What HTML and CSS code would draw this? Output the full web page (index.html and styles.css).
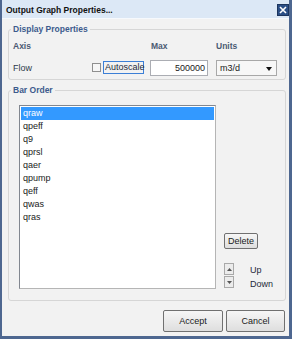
FILE: index.html
```html
<!DOCTYPE html>
<html lang="en">

<head>
  <meta charset="UTF-8" />
  <title>Output Graph Properties</title>
  <link rel="stylesheet" href="styles.css">
</head>

<body>
  <div class="window">
    <div class="titlebar">
      <span class="title">Output Graph Properties...</span>
      <span class="close">
        <svg width="12" height="12" viewBox="0 0 12 12">
          <rect x="0.5" y="0.5" width="11" height="11" fill="#2a4e86" stroke="#1c355e" />
          <path d="M3 3 L9 9 M9 3 L3 9" stroke="#fff" stroke-width="1.6" />
        </svg>
      </span>
    </div>

    <div class="content">
      <fieldset class="group display">
        <legend>Display Properties</legend>
        <div class="row head">
          <span class="col-axis">Axis</span>
          <span class="col-max">Max</span>
          <span class="col-units">Units</span>
        </div>
        <div class="row">
          <span class="col-axis">Flow</span>
          <span class="check"></span>
          <span class="autoscale">Autoscale</span>
          <span class="textbox">500000</span>
          <span class="select">m3/d<span class="arrow"></span></span>
        </div>
      </fieldset>

      <fieldset class="group order">
        <legend>Bar Order</legend>
        <div class="order-body">
          <ul class="listbox">
            <li class="selected">qraw</li>
            <li>qpeff</li>
            <li>q9</li>
            <li>qprsl</li>
            <li>qaer</li>
            <li>qpump</li>
            <li>qeff</li>
            <li>qwas</li>
            <li>qras</li>
          </ul>
          <div class="side">
            <span class="btn small">Delete</span>
            <div class="updown">
              <div class="spin">
                <span class="spin-btn"><svg width="5" height="3" viewBox="0 0 5 3"><path d="M0 3 L2.5 0 L5 3 Z" fill="#555" /></svg></span>
                <span class="spin-btn"><svg width="5" height="3" viewBox="0 0 5 3"><path d="M0 0 L2.5 3 L5 0 Z" fill="#555" /></svg></span>
              </div>
              <div class="updown-labels">
                <span>Up</span>
                <span>Down</span>
              </div>
            </div>
          </div>
        </div>
      </fieldset>

      <div class="buttons">
        <span class="btn big">Accept</span>
        <span class="btn big">Cancel</span>
      </div>
    </div>
  </div>
</body>

</html>
```

FILE: styles.css
```css
body {
  margin: 0;
  padding: 0;
  font-family: "Liberation Sans", Arial, sans-serif;
  font-size: 9px;
  color: #1a1a1a;
}

.window {
  width: 292px;
  height: 339px;
  box-sizing: border-box;
  border-left: 2px solid #4e6790;
  border-right: 3px solid #4e6790;
  border-bottom: 3px solid #4e6790;
  background-color: #f2f2f2;
  display: flex;
  flex-direction: column;
}

.titlebar {
  height: 19px;
  box-sizing: border-box;
  background-color: #dce8f6;
  border-bottom: 1px solid #f6f9fd;
  display: flex;
  align-items: center;
  justify-content: space-between;
  padding: 1px 0 0 4px;
}

.title {
  font-weight: bold;
  font-size: 8.5px;
  color: #111;
}

.close {
  display: flex;
}

.content {
  flex: 1;
  display: flex;
  flex-direction: column;
  padding: 0 3px 0 6px;
}

.group {
  margin: 0;
  border: 1px solid #d6d6d6;
  border-radius: 3px;
  min-width: 0;
}

.group legend {
  font-weight: bold;
  font-size: 8.5px;
  line-height: 11px;
  color: #3d5b8d;
  padding: 0 2px;
}

.display {
  margin-top: 5px;
  padding: 2px 3px 3px 4px;
}

.display legend {
  margin-left: -2px;
}

.row {
  display: flex;
  align-items: center;
  height: 17px;
}

.head {
  font-weight: bold;
  font-size: 8.5px;
  color: #4a5a72;
  margin-bottom: 5px;
}

.col-axis {
  width: 79px;
  color: #2e3a4c;
}

.head .col-axis {
  width: 138px;
  color: #4a5a72;
}

.col-max {
  width: 65px;
}

.check {
  width: 9px;
  height: 9px;
  box-sizing: border-box;
  border: 1px solid #8f8f8f;
  background-color: #f6f6f6;
  margin-right: 2px;
}

.autoscale {
  width: 41px;
  height: 13px;
  box-sizing: border-box;
  border: 1px solid #3c7fd6;
  padding-left: 1px;
  line-height: 11px;
  margin-right: 6px;
  color: #1e2a3a;
}

.textbox {
  width: 58px;
  height: 16px;
  box-sizing: border-box;
  border: 1px solid #abadb3;
  background-color: #fff;
  text-align: right;
  padding-right: 2px;
  line-height: 14px;
  margin-right: 8px;
}

.select {
  width: 61px;
  height: 16px;
  box-sizing: border-box;
  border: 1px solid #a8a8a8;
  background-color: #f7f7f7;
  line-height: 14px;
  padding-left: 3px;
  position: relative;
}

.arrow {
  position: absolute;
  right: 4px;
  top: 6px;
  border-left: 3px solid transparent;
  border-right: 3px solid transparent;
  border-top: 4px solid #111;
}

.order {
  margin-top: 5px;
  padding: 9px 3px 11px 10px;
}

.order legend {
  margin-left: -8px;
}

.order-body {
  display: flex;
}

.listbox {
  list-style: none;
  margin: 0;
  padding: 0;
  width: 197px;
  height: 184px;
  box-sizing: border-box;
  border: 1px solid #828790;
  border-right-color: #b5b5b5;
  border-bottom-color: #b5b5b5;
  background-color: #fff;
}

.listbox li {
  height: 13px;
  line-height: 13px;
  padding-left: 2px;
  margin: 0 1px;
}

.listbox li.selected {
  background-color: #3399ff;
  color: #fff;
  margin-top: 1px;
}

.side {
  display: flex;
  flex-direction: column;
  padding-left: 8px;
  padding-top: 128px;
}

.btn {
  display: flex;
  align-items: center;
  justify-content: center;
  border: 1px solid #707070;
  border-radius: 2px;
  background: linear-gradient(#f6f6f6, #dedede);
  color: #1a1a1a;
  box-sizing: border-box;
}

.small {
  width: 34px;
  height: 16px;
}

.updown {
  display: flex;
  margin-top: 14px;
}

.spin {
  display: flex;
  flex-direction: column;
  gap: 1px;
}

.spin-btn {
  width: 10px;
  height: 12px;
  box-sizing: border-box;
  border: 1px solid #a9a9a9;
  background-color: #ececec;
  display: flex;
  align-items: center;
  justify-content: center;
}

.updown-labels {
  display: flex;
  flex-direction: column;
  padding-left: 16px;
  padding-top: 2px;
  gap: 4px;
  color: #1e2a3a;
}

.buttons {
  display: flex;
  justify-content: flex-end;
  gap: 3px;
  margin-top: 9px;
  padding-right: 1px;
}

.big {
  width: 60px;
  height: 22px;
}

.big + .big {
  width: 59px;
}
```
